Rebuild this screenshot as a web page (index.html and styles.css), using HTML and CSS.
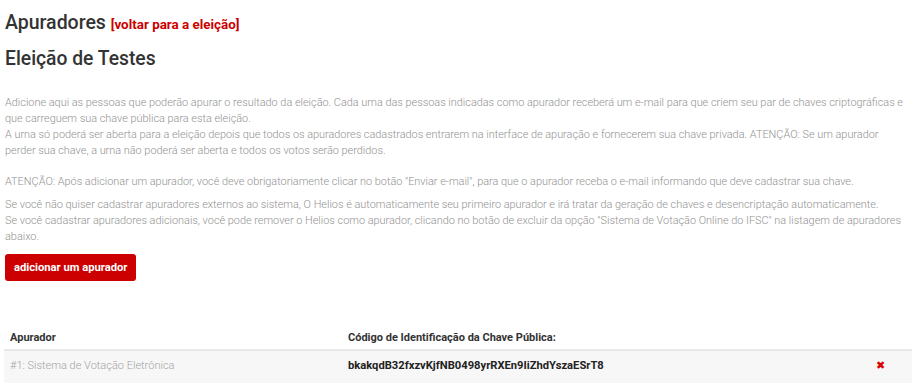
FILE: index.html
```html
<!DOCTYPE html>
<html lang="pt-BR">
<head>
    <meta charset="UTF-8">
    <title>Apuradores</title>
    <link rel="stylesheet" href="styles.css">
</head>
<body>
<div class="page">
    <h2 class="title">Apuradores <a class="back" href="#">[voltar para a eleição]</a></h2>
    <h3 class="election">Eleição de Testes</h3>

    <p class="info intro">
        Adicione aqui as pessoas que poderão apurar o resultado da eleição. Cada uma das pessoas indicadas como apurador receberá um e-mail para que criem seu par de chaves criptográficas e que carreguem sua chave pública para esta eleição.<br>
        A urna só poderá ser aberta para a eleição depois que todos os apuradores cadastrados entrarem na interface de apuração e fornecerem sua chave privada. ATENÇÃO: Se um apurador perder sua chave, a urna não poderá ser aberta e todos os votos serão perdidos.
    </p>

    <p class="info warn">ATENÇÃO: Após adicionar um apurador, você deve obrigatoriamente clicar no botão "Enviar e-mail", para que o apurador receba o e-mail informando que deve cadastrar sua chave.</p>

    <p class="info">
        Se você não quiser cadastrar apuradores externos ao sistema, O Helios é automaticamente seu primeiro apurador e irá tratar da geração de chaves e desencriptação automaticamente.<br>
        Se você cadastrar apuradores adicionais, você pode remover o Helios como apurador, clicando no botão de excluir da opção "Sistema de Votação Online do IFSC" na listagem de apuradores abaixo.
    </p>

    <a class="btn" href="#">adicionar um apurador</a>

    <table class="trustees">
        <thead>
            <tr>
                <th class="col-name">Apurador</th>
                <th>Código de Identificação da Chave Pública:</th>
                <th class="col-del"></th>
            </tr>
        </thead>
        <tbody>
            <tr>
                <td class="col-name">#1: Sistema de Votação Eletrônica</td>
                <td class="hash">bkakqdB32fxzvKjfNB0498yrRXEn9IiZhdYszaESrT8</td>
                <td class="col-del"><a class="del" href="#">&#10006;</a></td>
            </tr>
        </tbody>
    </table>
</div>
</body>
</html>
```

FILE: styles.css
```css
body {
    margin: 0;
    font-family: Roboto, "Liberation Sans", sans-serif;
    color: #333;
    background: #fff;
}

.page {
    width: 906px;
    padding: 6px 0 0 5px;
}

.title {
    margin: 4px 0 0;
    font-size: 19.5px;
    font-weight: 500;
    line-height: 26px;
}

.back {
    color: #c00;
    font-size: 13.4px;
    font-weight: 700;
    text-decoration: none;
}

.election {
    margin: 8px 0 0;
    font-size: 19.3px;
    font-weight: 500;
    line-height: 26px;
}

.info {
    margin: 0;
    font-size: 10.9px;
    font-weight: 300;
    line-height: 16px;
    color: #929292;
}

.intro {
    margin-top: 23px;
}

.warn {
    margin: 15px 0 7px;
}

.btn {
    display: block;
    width: max-content;
    margin-top: 9px;
    padding: 0 9px;
    height: 27px;
    line-height: 27px;
    background: #c00;
    color: #fff;
    font-size: 11.2px;
    font-weight: 700;
    border-radius: 3px;
    text-decoration: none;
}

.trustees {
    width: 908px;
    margin: 44px 0 0 -1px;
    border-collapse: collapse;
    font-size: 11px;
}

.trustees th {
    text-align: left;
    font-weight: 700;
    line-height: 13px;
    padding: 6px 6px 5px;
    border-bottom: 2px solid #e8e8e8;
}

.trustees td {
    background: #f7f7f7;
    line-height: 14px;
    padding: 8px 6px 10px;
}

.col-name {
    width: 326px;
}

.trustees td.col-name {
    color: #a4a4a4;
    font-weight: 300;
}

.hash {
    font-size: 11.2px;
    font-weight: 700;
    color: #222;
}

.col-del {
    width: 30px;
}

.del {
    color: #d00;
    font-size: 11px;
    text-decoration: none;
}
```
